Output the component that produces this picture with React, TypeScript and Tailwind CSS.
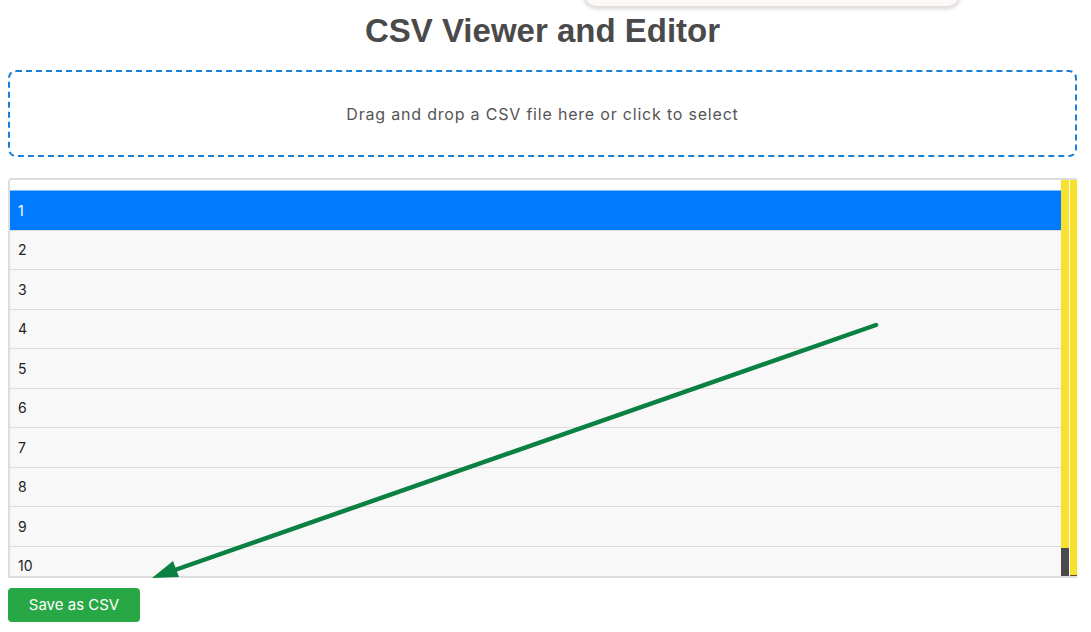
import React from 'react'

const rows = Array.from({ length: 10 }, (_, i) => i + 1)

// Annotation arrow drawn over the page
function Arrow() {
  return (
    <svg
      className="pointer-events-none absolute left-0 top-0"
      width="1091"
      height="632"
      viewBox="0 0 1091 632"
    >
      <line x1="876" y1="325" x2="172" y2="571" stroke="#0a8043" strokeWidth="4.5" strokeLinecap="round" />
      <polygon points="152,578 173,561 179,577" fill="#0a8043" />
    </svg>
  )
}

export default function App() {
  return (
    <div
      className="relative h-[632px] w-full overflow-hidden bg-white pl-2 pr-[14px]"
      style={{ fontFamily: 'Inter, "Open Sans", sans-serif' }}
    >
      {/* popup peeking from the top */}
      <div className="absolute left-[583px] top-[-40px] h-[47px] w-[378px] rounded-[14px] border border-[#eadcdc] bg-[#fdf9f9] shadow-[0_2px_4px_rgba(0,0,0,0.15)]" />

      <h1
        className="pt-[11px] text-center text-[33px] font-bold leading-[40px] text-[#4a4a4a]"
        style={{ fontFamily: '"Liberation Sans", Arial, sans-serif' }}
      >
        CSV Viewer and Editor
      </h1>

      {/* drop zone */}
      <div className="mt-[19px] flex h-[87px] items-center justify-center rounded-[8px] border-2 border-dashed border-[#1a7fd6]">
        <p className="text-[16px] tracking-[0.8px] text-[#555]">
          Drag and drop a CSV file here or click to select
        </p>
      </div>

      {/* table */}
      <div className="mt-[21px] flex h-[400px] overflow-hidden rounded-tl-[4px] border-2 border-r-0 border-[#dedede]">
        <div className="flex-1">
          <div className="h-[10px] bg-white" />
          {rows.map((n) => (
            <div
              key={n}
              className={
                n === 1
                  ? 'flex h-[39.5px] items-center border-t border-[#7fb9ff] bg-[#007bff] pl-2 text-[14px] text-white'
                  : 'flex h-[39.5px] items-center border-t border-[#dcdcdc] bg-[#f8f8f8] pl-2 text-[14px] text-[#222]'
              }
            >
              {n}
            </div>
          ))}
        </div>
        {/* scrollbar */}
        <div className="mt-[-2px] flex h-[400px] w-[16px] gap-px">
          <div className="flex w-[7.5px] flex-col justify-end bg-[#f7e12e]">
            <div className="mb-[1px] h-[29px] bg-[#4a4a4a]" />
          </div>
          <div className="flex w-[7.5px] flex-col justify-end bg-[#f7e12e]">
            <div className="mb-[1px] h-[2px] bg-[#5a4a20]" />
          </div>
        </div>
      </div>

      <button className="mt-[10px] h-[34px] w-[132px] rounded-[4px] bg-[#28a745] text-[15px] text-white">
        Save as CSV
      </button>

      <Arrow />
    </div>
  )
}
